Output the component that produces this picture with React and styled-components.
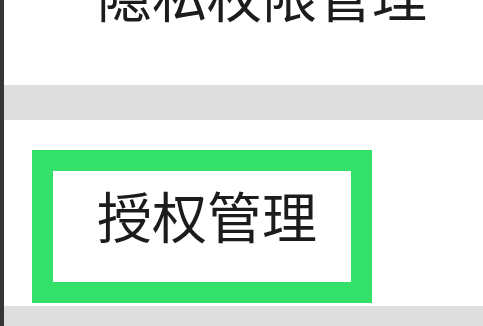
import React from "react";
import styled, { createGlobalStyle } from "styled-components";

const GlobalStyle = createGlobalStyle`
    html, body {
        margin: 0;
        padding: 0;
        background: #ffffff;
        overflow: hidden;
    }
    body {
        font-family: "Noto Sans CJK SC", "Noto Sans", sans-serif;
    }
`;

const Screen = styled.div`
    display: flex;
    width: 483px;
    height: 326px;
    overflow: hidden;
`;

const EdgeStrip = styled.div`
    width: 4px;
    flex-shrink: 0;
    background: #353535;
`;

const List = styled.div`
    display: flex;
    flex-direction: column;
    flex: 1;
    background: #ffffff;
`;

const Item = styled.div`
    display: flex;
    flex-direction: column;
    align-items: flex-start;
    height: ${(p) => p.height}px;
    flex-shrink: 0;
    padding-left: ${(p) => p.padLeft}px;
    padding-top: ${(p) => p.padTop}px;
    box-sizing: border-box;
    overflow: hidden;
`;

const Divider = styled.div`
    height: ${(p) => p.height}px;
    flex-shrink: 0;
    background: #dedede;
`;

const Label = styled.div`
    font-size: 55px;
    line-height: 56px;
    color: #1c1c1c;
    white-space: nowrap;
    margin-top: ${(p) => p.shift || 0}px;
`;

const Highlight = styled.div`
    width: 340px;
    height: 153px;
    box-sizing: border-box;
    border: 21px solid #33e06a;
    padding: 15px 0 0 44px;
`;

const App = () => {
    return (
        <>
            <GlobalStyle />
            <Screen>
                <EdgeStrip />
                <List>
                    <Item height={85} padLeft={93} padTop={0}>
                        <Label shift={-35}>隐私权限管理</Label>
                    </Item>
                    <Divider height={35} />
                    <Item height={186} padLeft={28} padTop={30}>
                        <Highlight>
                            <Label>授权管理</Label>
                        </Highlight>
                    </Item>
                    <Divider height={40} />
                </List>
            </Screen>
        </>
    );
};

export default App;
